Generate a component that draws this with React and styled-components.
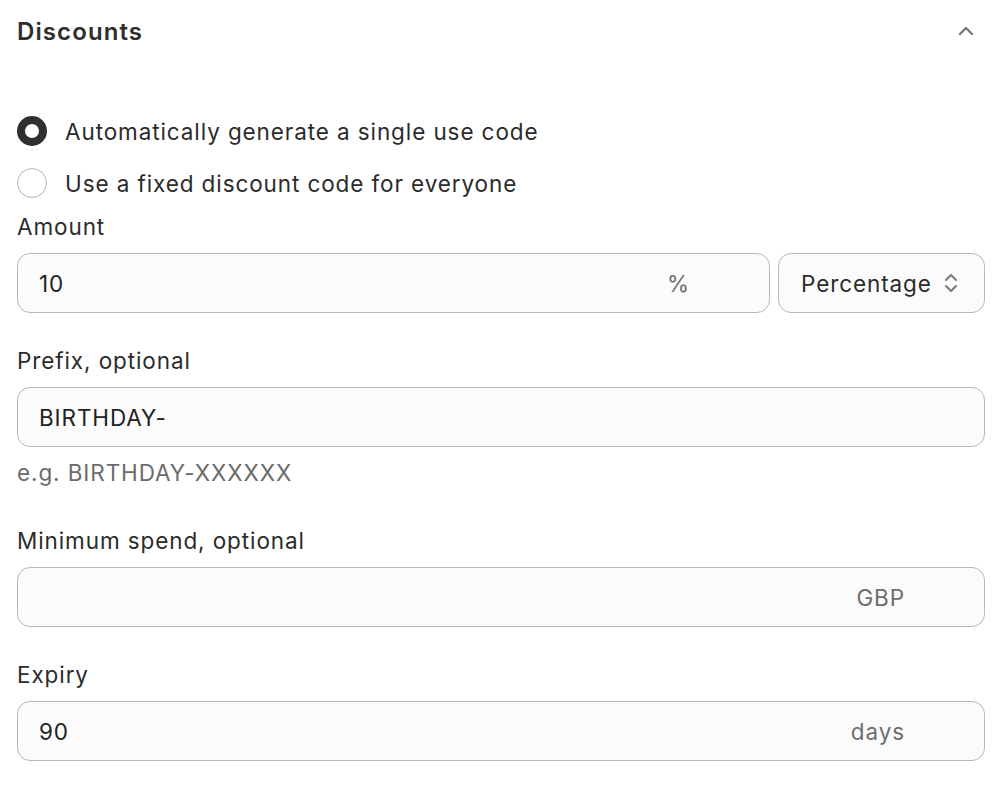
import styled, { createGlobalStyle } from 'styled-components'
import { ChevronUp, ChevronsUpDown } from 'lucide-react'

const GlobalStyle = createGlobalStyle`
body {
  margin: 0;
  background: #fff;
  font-family: Inter, "Noto Sans", sans-serif;
  color: #2b2b2b;
  letter-spacing: 0.9px;
}
`

const Panel = styled.div`
  display: flex;
  flex-direction: column;
  padding: 0 15px 0 17px;
`

const Header = styled.div`
  display: flex;
  align-items: center;
  justify-content: space-between;
  height: 62px;
`

const Title = styled.h2`
  margin: 0;
  font-size: 24px;
  font-weight: 600;
  letter-spacing: 1.1px;
  color: #2e2e2e;
`

const Toggle = styled.button`
  display: flex;
  border: 0;
  background: none;
  padding: 0;
  margin-right: 7px;
  color: #7a7a7a;
  cursor: pointer;
`

const RadioGroup = styled.div`
  display: flex;
  flex-direction: column;
  margin-top: 43px;
`

const RadioRow = styled.label`
  display: flex;
  align-items: center;
  gap: 18px;
  height: 52px;
  font-size: 22.5px;
  color: #2b2b2b;
  cursor: pointer;
`

const RadioDot = styled.span`
  box-sizing: border-box;
  width: 30px;
  height: 30px;
  border-radius: 50%;
  background: #fff;
  border: ${props => props.checked ? '8.5px solid #2f2f2f' : '1.5px solid #b3b3b3'};
`

const Fields = styled.div`
  display: flex;
  flex-direction: column;
  gap: 34px;
  margin-top: 4px;
`

const Field = styled.div`
  display: flex;
  flex-direction: column;
`

const Label = styled.div`
  font-size: 22.5px;
  line-height: 28px;
  color: #2b2b2b;
  margin-bottom: 12px;
`

const Row = styled.div`
  display: flex;
  gap: 8px;
`

const InputBox = styled.div`
  flex: 1 1 auto;
  min-width: 0;
  display: flex;
  align-items: center;
  box-sizing: border-box;
  height: 60px;
  padding: 0 79px 0 21px;
  border: 1px solid #b8b8b8;
  border-radius: 13px;
  background: #fbfbfb;
  font-size: 22.5px;
`

const Value = styled.span`
  flex: 1;
  color: #222;
`

const Suffix = styled.span`
  color: #6e6e6e;
`

const Select = styled.div`
  display: flex;
  align-items: center;
  justify-content: space-between;
  box-sizing: border-box;
  flex: 0 0 207px;
  height: 60px;
  padding: 0 21px 0 22px;
  border: 1px solid #b8b8b8;
  border-radius: 13px;
  background: #fbfbfb;
  font-size: 22.5px;
  color: #2b2b2b;
  svg { color: #7a7a7a; }
`

const Help = styled.div`
  margin: 12px 0 6px;
  font-size: 22.5px;
  line-height: 28px;
  color: #6b6b6b;
`

function TextField({ label, value, suffix, help }) {
  return (
    <Field>
      <Label>{label}</Label>
      <InputBox>
        <Value>{value}</Value>
        {suffix && <Suffix>{suffix}</Suffix>}
      </InputBox>
      {help && <Help>{help}</Help>}
    </Field>
  )
}

export default function App() {
  return (
    <>
      <GlobalStyle />
      <Panel>
        <Header>
          <Title>Discounts</Title>
          <Toggle><ChevronUp size={24} strokeWidth={2.4} /></Toggle>
        </Header>
        <RadioGroup>
          <RadioRow><RadioDot checked />Automatically generate a single use code</RadioRow>
          <RadioRow><RadioDot />Use a fixed discount code for everyone</RadioRow>
        </RadioGroup>
        <Fields>
          <Field>
            <Label>Amount</Label>
            <Row>
              <InputBox>
                <Value>10</Value>
                <Suffix>%</Suffix>
              </InputBox>
              <Select>
                Percentage
                <ChevronsUpDown size={24} strokeWidth={2} />
              </Select>
            </Row>
          </Field>
          <TextField label="Prefix, optional" value="BIRTHDAY-" help="e.g. BIRTHDAY-XXXXXX" />
          <TextField label="Minimum spend, optional" value="" suffix="GBP" />
          <TextField label="Expiry" value="90" suffix="days" />
        </Fields>
      </Panel>
    </>
  )
}
